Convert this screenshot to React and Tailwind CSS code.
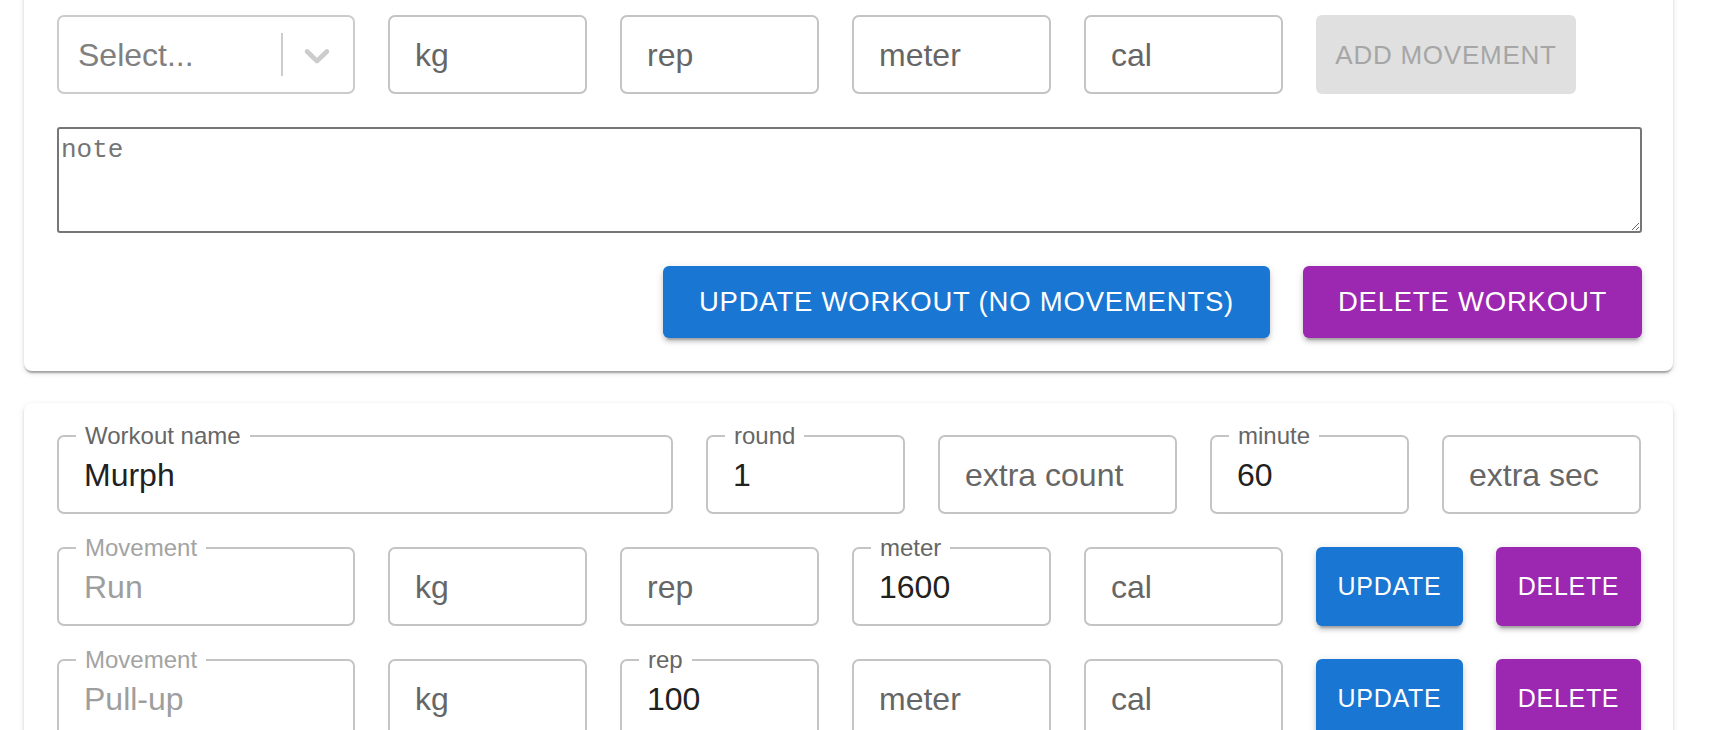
import React from "react";

// Outlined text field, label either sits in the field or floats on the top border
function Field({ className, label, value, disabled }) {
  const shrunk = value !== undefined;
  return (
    <div
      className={`relative h-[79px] shrink-0 rounded-[7px] border-2 border-[#c4c4c4] flex items-center pl-[25px] text-[32px] leading-none ${className}`}
    >
      {shrunk ? (
        <>
          <span
            className={`absolute left-[17px] top-[-13px] bg-white px-[9px] text-[24px] leading-none ${
              disabled ? "text-[#a3a3a3]" : "text-[#666666]"
            }`}
          >
            {label}
          </span>
          <span className={disabled ? "text-[#9e9e9e]" : "text-[#212121]"}>{value}</span>
        </>
      ) : (
        <span className="text-[#666666]">{label}</span>
      )}
    </div>
  );
}

function RowButton({ className, children }) {
  return (
    <button
      className={`h-[79px] shrink-0 rounded-[6px] text-white text-[25px] leading-none tracking-[0.02857em] uppercase flex items-center justify-center shadow-[0_6px_2px_-4px_rgba(0,0,0,0.2),0_4px_4px_0_rgba(0,0,0,0.14),0_2px_10px_0_rgba(0,0,0,0.12)] ${className}`}
    >
      {children}
    </button>
  );
}

function SelectBox() {
  return (
    <div className="h-[79px] w-[298px] shrink-0 rounded-[7px] border-2 border-[#cccccc] flex items-center">
      <span className="flex-1 pl-[19px] text-[32px] leading-none text-[#808080]">Select...</span>
      <span className="w-[2px] h-[43px] bg-[#cccccc]" />
      <svg viewBox="0 0 20 20" className="ml-[13px] mr-[15px] w-[42px] h-[42px]" fill="#cccccc">
        <path d="M4.516 7.548c0.436-0.446 1.043-0.481 1.576 0l3.908 3.747 3.908-3.747c0.533-0.481 1.141-0.446 1.574 0 0.436 0.445 0.408 1.197 0 1.615-0.406 0.418-4.695 4.502-4.695 4.502-0.217 0.223-0.502 0.335-0.787 0.335s-0.57-0.112-0.789-0.335c0 0-4.287-4.084-4.695-4.502s-0.436-1.17 0-1.615z" />
      </svg>
    </div>
  );
}

const cardClass =
  "bg-white rounded-[8px] pl-[33px] pr-[31px] flex flex-col gap-[33px] shadow-[0_4px_2px_-2px_rgba(0,0,0,0.2),0_2px_2px_0_rgba(0,0,0,0.14),0_2px_6px_0_rgba(0,0,0,0.12)]";

function MovementRow({ name, kg, rep, meter, cal }) {
  return (
    <div className="flex gap-[33px]">
      <Field className="w-[298px]" label="Movement" value={name} disabled />
      <Field className="w-[199px]" label="kg" value={kg} />
      <Field className="w-[199px]" label="rep" value={rep} />
      <Field className="w-[199px]" label="meter" value={meter} />
      <Field className="w-[199px]" label="cal" value={cal} />
      <RowButton className="w-[147px] bg-[#1976d2]">Update</RowButton>
      <RowButton className="w-[145px] bg-[#9c27b0]">Delete</RowButton>
    </div>
  );
}

export default function App() {
  return (
    <div className="h-[730px] overflow-hidden bg-white font-['Liberation_Sans',Arial,Helvetica,sans-serif]">
      <div className="-mt-[18px] ml-[24px] w-[1649px] flex flex-col gap-[32px]">
        {/* Card with new movement form */}
        <div className={`${cardClass} py-[33px]`}>
          <div className="flex gap-[33px]">
            <SelectBox />
            <Field className="w-[199px]" label="kg" />
            <Field className="w-[199px]" label="rep" />
            <Field className="w-[199px]" label="meter" />
            <Field className="w-[199px]" label="cal" />
            <button className="h-[79px] w-[260px] shrink-0 rounded-[6px] bg-[#e0e0e0] text-[#a6a6a6] text-[26px] leading-none tracking-[0.02857em] uppercase flex items-center justify-center">
              Add movement
            </button>
          </div>
          <textarea
            placeholder="note"
            className="block h-[106px] w-full rounded-[3px] border-2 border-[#767676] p-[2px] font-['Liberation_Mono',monospace] text-[26px] text-[#212121] placeholder:text-[#757575] outline-none"
          />
          <div className="flex justify-end gap-[33px]">
            <button className="h-[72px] w-[607px] rounded-[6px] bg-[#1976d2] text-white text-[27.5px] leading-none tracking-[0.02857em] uppercase flex items-center justify-center shadow-[0_6px_2px_-4px_rgba(0,0,0,0.2),0_4px_4px_0_rgba(0,0,0,0.14),0_2px_10px_0_rgba(0,0,0,0.12)]">
              Update workout (no movements)
            </button>
            <button className="h-[72px] w-[339px] rounded-[6px] bg-[#9c27b0] text-white text-[27.5px] leading-none tracking-[0.02857em] uppercase flex items-center justify-center shadow-[0_6px_2px_-4px_rgba(0,0,0,0.2),0_4px_4px_0_rgba(0,0,0,0.14),0_2px_10px_0_rgba(0,0,0,0.12)]">
              Delete workout
            </button>
          </div>
        </div>

        {/* Card for Murph */}
        <div className={`${cardClass} pt-[32px] pb-[33px]`}>
          <div className="flex gap-[33px]">
            <Field className="w-[616px]" label="Workout name" value="Murph" />
            <Field className="w-[199px]" label="round" value="1" />
            <Field className="w-[239px]" label="extra count" />
            <Field className="w-[199px]" label="minute" value="60" />
            <Field className="w-[199px]" label="extra sec" />
          </div>
          <MovementRow name="Run" meter="1600" />
          <MovementRow name="Pull-up" rep="100" />
          <MovementRow name="Push-up" rep="200" />
        </div>
      </div>
    </div>
  );
}
